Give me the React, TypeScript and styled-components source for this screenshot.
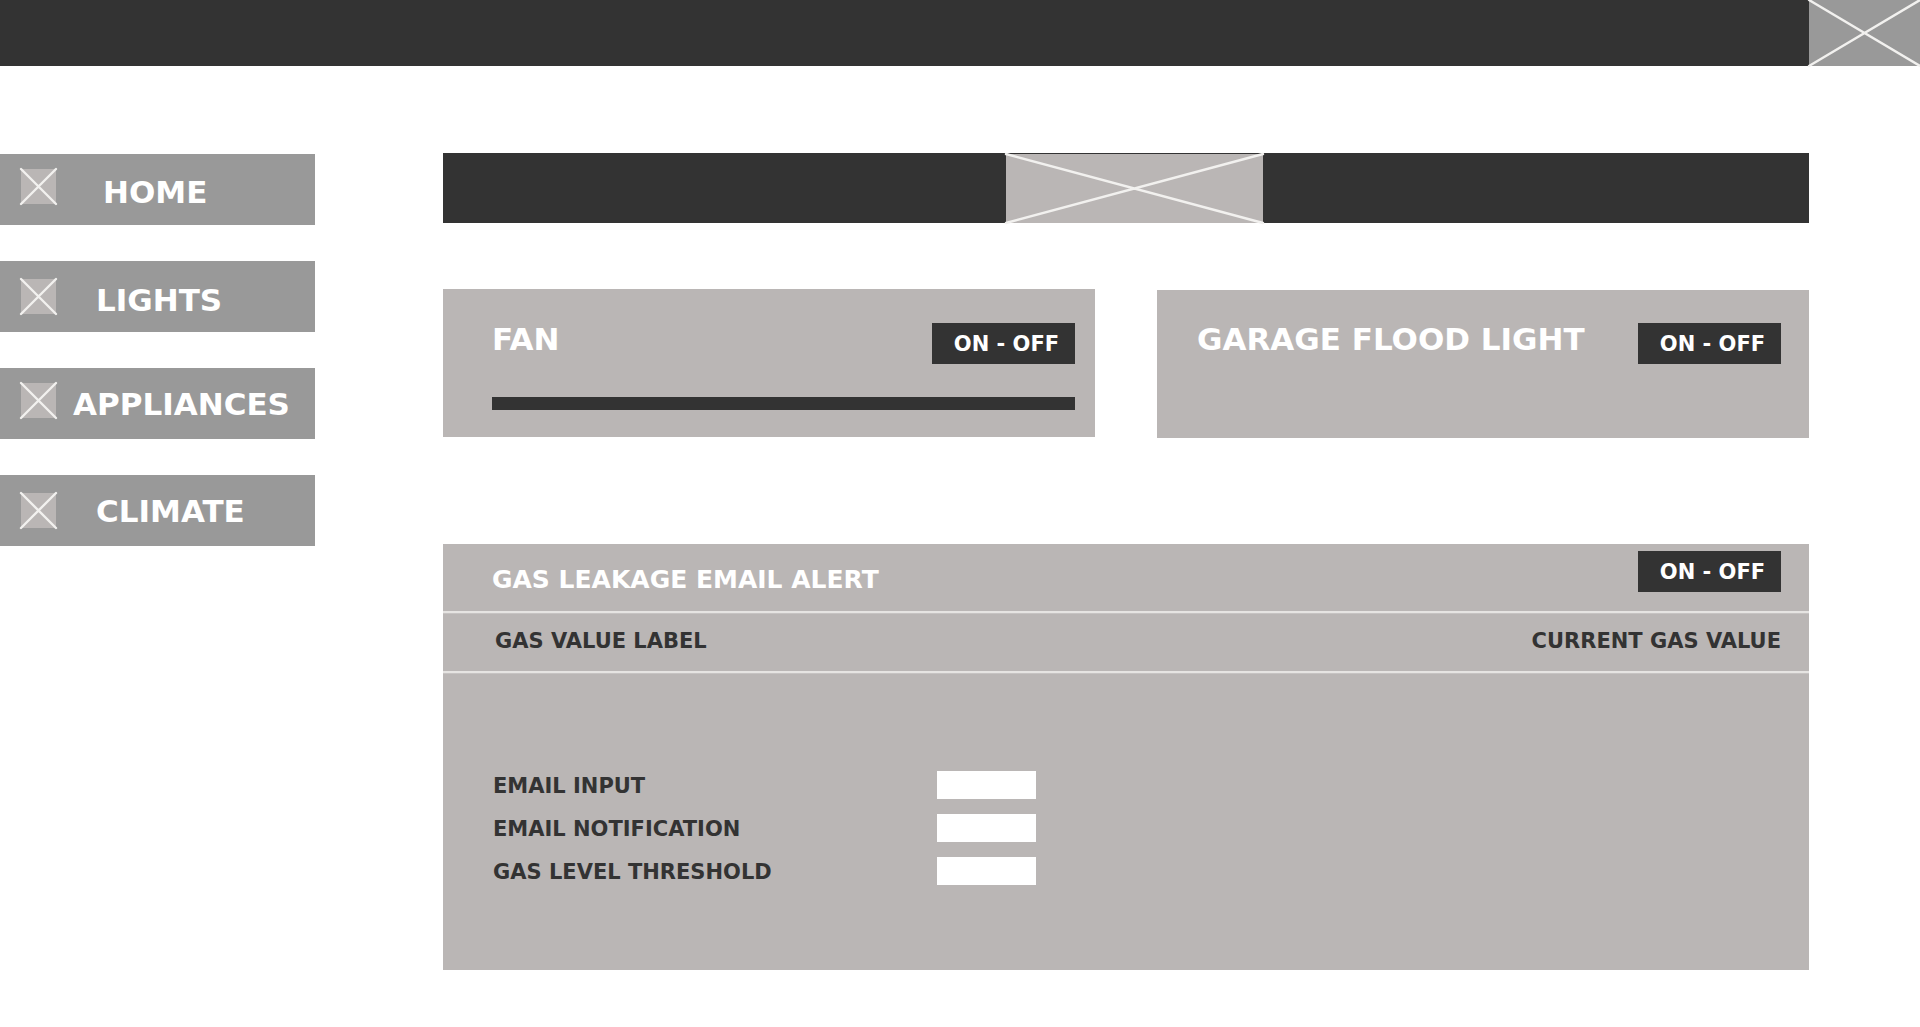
import React from "react";
import styled, { createGlobalStyle } from "styled-components";

const color = {
  dark: "#333333",
  mid: "#999999",
  panel: "#bab6b5",
  line: "#e6e4e2",
  lineEdge: "#c6c3c2",
  cross: "#f2f1ef",
  white: "#ffffff",
};

const GlobalStyle = createGlobalStyle`
  *, *::before, *::after { box-sizing: border-box; }
  body {
    margin: 0;
    background: ${color.white};
    font-family: "DejaVu Sans", sans-serif;
    font-weight: 700;
  }
`;

const TopBar = styled.header`
  display: flex;
  justify-content: flex-end;
  height: 66px;
  background: ${color.dark};
`;

const Layout = styled.div`
  display: grid;
  grid-template-columns: 315px minmax(0, 1fr);
  column-gap: 128px;
  align-items: start;
  padding: 87px 111px 57px 0;
`;

const Nav = styled.nav`
  display: flex;
  flex-direction: column;
  gap: 36px;
  padding-top: 1px;
`;

const NavLink = styled.a<{ $inset: number; $low?: boolean }>`
  display: grid;
  grid-template-columns: ${(p) => p.$inset}px 1fr;
  align-items: start;
  height: 71px;
  padding: ${(p) => (p.$low ? 18 : 15)}px 0 0 21px;
  background: ${color.mid};
  color: ${color.white};
  font-size: 31px;
  line-height: 36px;
  white-space: nowrap;
  text-decoration: none;
`;

const NavText = styled.span<{ $top: number }>`
  padding-top: ${(p) => p.$top}px;
`;

const Main = styled.main`
  display: flex;
  flex-direction: column;
`;

const Banner = styled.div`
  display: grid;
  grid-template-columns: 563fr 257px 546fr;
  height: 70px;
  padding-top: 1px;
  background: ${color.dark};
`;

const BannerSlot = styled.div`
  grid-column: 2;
  display: grid;
`;

const Cards = styled.div`
  display: grid;
  grid-template-columns: 1fr 1fr;
  column-gap: 62px;
  align-items: start;
  margin-top: 66px;
`;

const Card = styled.section<{ $inset: number; $drop?: boolean }>`
  display: flex;
  flex-direction: column;
  gap: 33px;
  height: 148px;
  margin-top: ${(p) => (p.$drop ? 1 : 0)}px;
  padding: ${(p) => (p.$drop ? 33 : 34)}px ${(p) => (p.$drop ? 28 : 20)}px 0 ${(p) => p.$inset}px;
  background: ${color.panel};
`;

const CardHead = styled.div`
  display: flex;
  justify-content: space-between;
  align-items: center;
  height: 41px;
`;

const CardTitle = styled.h2`
  margin: 0 0 10px;
  color: ${color.white};
  font-size: 31px;
  line-height: 36px;
  white-space: nowrap;
`;

const Toggle = styled.button`
  flex: none;
  width: 143px;
  height: 41px;
  padding: 0 14px 0 20px;
  border: 0;
  background: ${color.dark};
  color: ${color.white};
  font: inherit;
  font-size: 21px;
  line-height: 24px;
  text-align: center;
  white-space: nowrap;
  cursor: pointer;
`;

const Slider = styled.input`
  appearance: none;
  display: block;
  width: 100%;
  height: 13px;
  margin: 0;
  background: ${color.dark};

  &::-webkit-slider-thumb {
    appearance: none;
    width: 13px;
    height: 13px;
    background: ${color.dark};
  }
`;

const GasPanel = styled.section`
  margin-top: 106px;
  padding-bottom: 85px;
  background: ${color.panel};
`;

const GasHead = styled.div`
  display: flex;
  justify-content: space-between;
  align-items: flex-start;
  height: 69px;
  padding: 7px 28px 0 49px;
  border-bottom: 2px solid ${color.line};
  box-shadow: 0 1px 0 ${color.lineEdge};
`;

const GasTitle = styled.h2`
  margin: 0;
  padding-top: 14px;
  color: ${color.white};
  font-size: 25px;
  line-height: 30px;
`;

const GasRow = styled.div`
  display: flex;
  justify-content: space-between;
  align-items: center;
  height: 60px;
  padding: 0 28px 2px 52px;
  border-bottom: 2px solid ${color.line};
  box-shadow: 0 1px 0 ${color.lineEdge};
  color: ${color.dark};
  font-size: 21px;
  line-height: 24px;
`;

const Form = styled.form`
  display: flex;
  flex-direction: column;
  gap: 15px;
  padding: 98px 0 0 50px;
`;

const Field = styled.div`
  display: grid;
  grid-template-columns: 444px 99px;
  align-items: center;
  color: ${color.dark};
  font-size: 21px;
  line-height: 24px;
`;

const FieldLabel = styled.label`
  padding-top: 2px;
`;

const TextBox = styled.input`
  width: 100%;
  height: 28px;
  padding: 0 6px;
  border: 0;
  border-radius: 0;
  background: ${color.white};
  color: ${color.dark};
  font: inherit;
  font-size: 14px;
`;

const Drawing = styled.svg`
  display: block;
  overflow: visible;
`;

function Placeholder({ width, height, fill }: { width: number; height: number; fill: string }) {
  return (
    <Drawing width={width} height={height} viewBox={`0 0 ${width} ${height}`} aria-hidden="true">
      <rect width={width} height={height} fill={fill} />
      <path
        d={`M0 0L${width} ${height}M${width} 0L0 ${height}`}
        stroke={color.cross}
        strokeWidth="2.4"
        strokeLinecap="round"
      />
    </Drawing>
  );
}

const navItems = [
  { label: "HOME", inset: 82, top: 5 },
  { label: "LIGHTS", inset: 75, top: 3, low: true },
  { label: "APPLIANCES", inset: 52, top: 3 },
  { label: "CLIMATE", inset: 75, top: 0, low: true },
];

const fields = [
  { id: "email", label: "EMAIL INPUT", type: "email" },
  { id: "notification", label: "EMAIL NOTIFICATION", type: "text" },
  { id: "threshold", label: "GAS LEVEL THRESHOLD", type: "text" },
];

export default function App() {
  return (
    <>
      <GlobalStyle />
      <TopBar>
        <Placeholder width={111} height={66} fill={color.mid} />
      </TopBar>
      <Layout>
        <Nav>
          {navItems.map((item) => (
            <NavLink key={item.label} href="#" $inset={item.inset} $low={item.low}>
              <Placeholder width={35} height={35} fill={color.panel} />
              <NavText $top={item.top}>{item.label}</NavText>
            </NavLink>
          ))}
        </Nav>
        <Main>
          <Banner>
            <BannerSlot>
              <Placeholder width={257} height={69} fill={color.panel} />
            </BannerSlot>
          </Banner>
          <Cards>
            <Card $inset={49}>
              <CardHead>
                <CardTitle>FAN</CardTitle>
                <Toggle type="button">ON - OFF</Toggle>
              </CardHead>
              <Slider type="range" aria-label="Fan speed" />
            </Card>
            <Card $inset={40} $drop>
              <CardHead>
                <CardTitle>GARAGE FLOOD LIGHT</CardTitle>
                <Toggle type="button">ON - OFF</Toggle>
              </CardHead>
            </Card>
          </Cards>
          <GasPanel>
            <GasHead>
              <GasTitle>GAS LEAKAGE EMAIL ALERT</GasTitle>
              <Toggle type="button">ON - OFF</Toggle>
            </GasHead>
            <GasRow>
              <span>GAS VALUE LABEL</span>
              <span>CURRENT GAS VALUE</span>
            </GasRow>
            <Form>
              {fields.map((field) => (
                <Field key={field.id}>
                  <FieldLabel htmlFor={field.id}>{field.label}</FieldLabel>
                  <TextBox id={field.id} type={field.type} />
                </Field>
              ))}
            </Form>
          </GasPanel>
        </Main>
      </Layout>
    </>
  );
}
